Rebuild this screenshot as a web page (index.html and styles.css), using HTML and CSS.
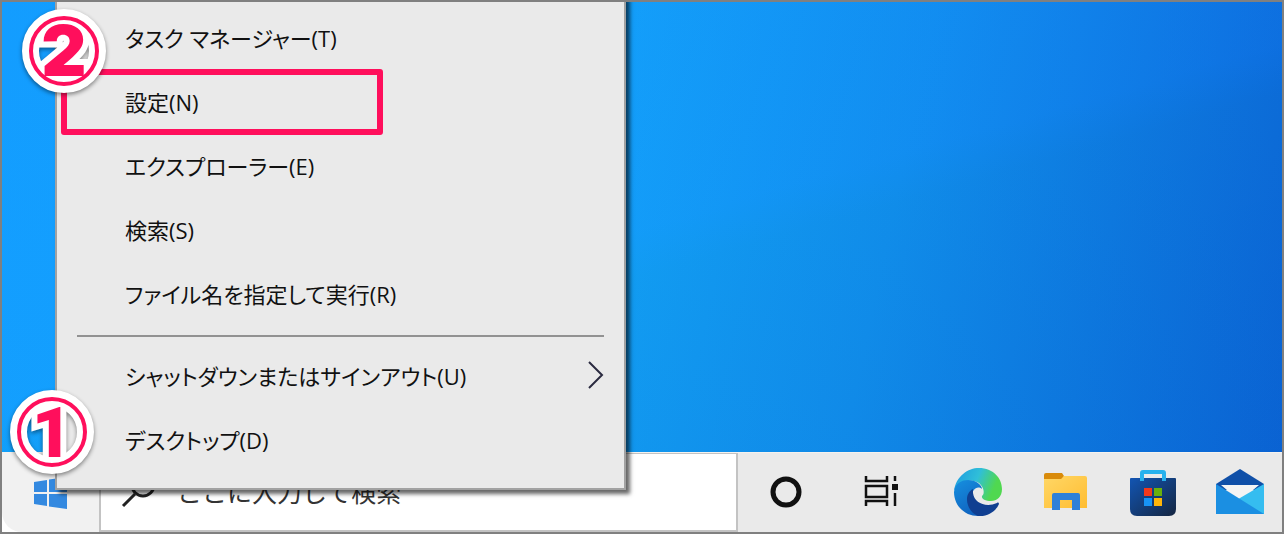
FILE: index.html
```
<!DOCTYPE html>
<html lang="ja">
<head>
    <meta charset="utf-8">
    <title>デスクトップ</title>
    <link rel="stylesheet" href="styles.css">
</head>
<body>
    <main class="desktop"></main>

    <footer class="taskbar">
        <button type="button" class="start" aria-label="スタート">
            <svg width="34" height="32" viewBox="0 0 34 32" fill="#3389e0">
                <path d="M0 5L13 3V15H0zM15 2.600L33 0V15H15zM0 17H13V29L0 27zM15 17H33V32L15 29.400z"/>
            </svg>
        </button>
        <label class="search">
            <svg width="34" height="38" viewBox="0 0 34 38" fill="none" stroke="#222" stroke-width="3">
                <circle cx="20" cy="12" r="11"/>
                <path d="M12 21L0 33"/>
            </svg>
            <input type="text" placeholder="ここに入力して検索" aria-label="検索">
        </label>
        <div class="icons">
            <button type="button" aria-label="Cortana">
                <svg width="48" height="48" viewBox="0 0 48 48">
                    <circle cx="24" cy="23" r="13" fill="none" stroke="#111" stroke-width="5"/>
                </svg>
            </button>
            <button type="button" aria-label="タスク ビュー">
                <svg width="48" height="48" viewBox="0 0 48 48" fill="none" stroke="#111" stroke-width="2.500">
                    <path d="M8 7V12H29V7M8 37V32H29V37M8 17H29V28H8zM37 7V12M37 24V37"/>
                    <path d="M34 15H40V21H34z" fill="#111" stroke="none"/>
                </svg>
            </button>
            <button type="button" aria-label="Microsoft Edge">
                <svg width="48" height="48" viewBox="0 0 48 48">
                    <defs>
                        <linearGradient id="edgeTop" x1="0" y1="0.300" x2="1" y2="0.600">
                            <stop offset="0" stop-color="#1e9fe0"/>
                            <stop offset="0.450" stop-color="#30bfd8"/>
                            <stop offset="0.850" stop-color="#50d850"/>
                        </linearGradient>
                        <linearGradient id="edgeSide" x1="0" y1="0" x2="0.600" y2="1">
                            <stop offset="0" stop-color="#1690e0"/>
                            <stop offset="1" stop-color="#0f60bd"/>
                        </linearGradient>
                    </defs>
                    <path d="M0 22C2 7 14 -1 25 -1C39 -1 48 9 48 20C48 28 43 32 37 32C32 32 27 30 28 27C31 25 30 18 25 14C16 8 4 13 0 22z" fill="url(#edgeTop)"/>
                    <path d="M0 23C1 14 8 11 14 11C22 11 28 16 28 20C23 16 18 21 18 27C18 36 26 42 34 41C31 46 27 47 24 47C11 47 0 37 0 23z" fill="url(#edgeSide)"/>
                    <path d="M19 20C9 25 12 42 24 47C34 48 42 42 45 35C45 34 44 33 43 34C32 39 20 34 19 24z" fill="#103f91"/>
                </svg>
            </button>
            <button type="button" class="pinned" aria-label="エクスプローラー">
                <svg width="48" height="48" viewBox="0 0 48 48">
                    <defs>
                        <linearGradient id="folder" x1="0" y1="0" x2="1" y2="1">
                            <stop offset="0" stop-color="#ffd766"/>
                            <stop offset="1" stop-color="#ffbd32"/>
                        </linearGradient>
                    </defs>
                    <path d="M2 6Q2 4 4 4H20L22 7L20 11H2z" fill="#d98b0b"/>
                    <path d="M2 10H19L22 7H43Q45 7 45 9V39H2z" fill="url(#folder)"/>
                    <path d="M10 41V26Q10 24 12 24H36Q38 24 38 26V41H30V31H18V41z" fill="#2f80d8"/>
                </svg>
            </button>
            <button type="button" aria-label="Microsoft Store">
                <svg width="48" height="48" viewBox="0 0 48 48">
                    <defs>
                        <linearGradient id="bag" x1="0" y1="0" x2="1" y2="1">
                            <stop offset="0" stop-color="#1255b3"/>
                            <stop offset="1" stop-color="#152641"/>
                        </linearGradient>
                    </defs>
                    <path d="M0 10Q0 9 1 9H45Q46 9 46 10V40Q46 47 39 47H7Q0 47 0 40z" fill="url(#bag)"/>
                    <path d="M12 12V4Q12 3 13 3H33Q34 3 34 4V12" fill="none" stroke="#27b1ed" stroke-width="4"/>
                    <path d="M14 19H22V27H14z" fill="#f4391b"/>
                    <path d="M24 19H32V27H24z" fill="#6ab00d"/>
                    <path d="M14 29H22V37H14z" fill="#1793f5"/>
                    <path d="M24 29H32V37H24z" fill="#ffb509"/>
                </svg>
            </button>
            <button type="button" aria-label="メール">
                <svg width="48" height="48" viewBox="0 0 48 48">
                    <path d="M-2 15L22 0L46 15V21H-2z" fill="#1050a8"/>
                    <path d="M3 16H41L22 32z" fill="#f4f4f4"/>
                    <path d="M46 15V45H-2L22 29z" fill="#35bdf0"/>
                    <path d="M-2 15L46 45H-2z" fill="#1b8fe2"/>
                </svg>
            </button>
        </div>
    </footer>

    <nav class="menu">
        <ul>
            <li><button type="button">タスク マネージャー(T)</button></li>
            <li class="marked"><button type="button">設定(N)</button></li>
            <li><button type="button">エクスプローラー(E)</button></li>
            <li><button type="button">検索(S)</button></li>
            <li><button type="button">ファイル名を指定して実行(R)</button></li>
        </ul>
        <hr>
        <ul>
            <li>
                <button type="button">シャットダウンまたはサインアウト(U)
                    <svg width="16" height="28" viewBox="0 0 16 28" fill="none" stroke="#2b2b40" stroke-width="2">
                        <path d="M1 1L14 14L1 27"/>
                    </svg>
                </button>
            </li>
            <li><button type="button">デスクトップ(D)</button></li>
        </ul>
        <svg class="step step-two" width="84" height="84" viewBox="0 0 84 84">
            <circle class="disc" cx="42" cy="42" r="33.500"/>
            <text x="42" y="67">2</text>
            <circle class="ring" cx="42" cy="42" r="33"/>
        </svg>
        <svg class="step step-one" width="84" height="84" viewBox="0 0 84 84">
            <circle class="disc" cx="42" cy="42" r="33.500"/>
            <text x="42" y="67">1</text>
            <circle class="ring" cx="42" cy="42" r="33"/>
        </svg>
    </nav>
</body>
</html>
```
FILE: styles.css
```
*,
*::after {
  box-sizing: border-box;
}

body {
  position: relative;
  display: flex;
  flex-direction: column;
  min-height: 100vh;
  margin: 0;
  border: 2px solid #808080;
  overflow: hidden;
  font-family: "Open Sans", "Noto Sans CJK JP", sans-serif;
  font-size: 22px;
  color: #111;
}

button {
  padding: 0;
  border: none;
  background: none;
  font: inherit;
  color: inherit;
}

svg {
  display: block;
  flex: none;
  overflow: visible;
}

.desktop {
  flex: 1;
  background:
    linear-gradient(164deg, rgba(16, 128, 255, 0.2) 0%, rgba(16, 128, 255, 0.15) 50%, rgba(0, 110, 190, 0.1) 56%, rgba(0, 90, 190, 0.15) 100%),
    linear-gradient(102deg, #14a4ff 0%, #14a6fa 44%, #1290ee 68%, #0c64d6 100%);
}

.taskbar {
  display: flex;
  height: 80px;
  border-top: 1px solid #f5f2ee;
  background: #eaeaea;
}

.start {
  display: flex;
  align-items: center;
  justify-content: center;
  width: 97px;
  background: #f1f1f1;
  border-bottom-left-radius: 20px;
  box-shadow: -20px 20px 0 #fff;
}

.search {
  display: flex;
  flex: 1;
  align-items: center;
  gap: 20px;
  padding-left: 22px;
  border: 2px solid #c3c3c3;
  border-top-width: 1px;
  background: #fff;
}

.search input {
  flex: 1;
  min-width: 0;
  padding: 0;
  border: none;
  outline: none;
  background: none;
  font: inherit;
  font-size: 25px;
}

.search input::placeholder {
  color: #333;
}

.icons {
  display: flex;
  align-items: center;
  gap: 48px;
  padding: 0 16px 0 24px;
}

.icons .pinned,
.icons .pinned ~ button {
  margin-left: -8px;
}

/* start button context menu */
.menu {
  position: absolute;
  left: 53px;
  bottom: 42px;
  width: 571px;
  padding: 8px 0 17px;
  border: 2px solid #a2a2a2;
  background: #eaeaea;
  box-shadow: 4px 4px 4px rgba(0, 0, 0, 0.6);
  font-feature-settings: "palt";
}

.menu ul {
  margin: 0;
  padding: 0;
  list-style: none;
}

.menu li {
  position: relative;
}

.menu li button {
  display: flex;
  align-items: center;
  justify-content: space-between;
  width: 100%;
  height: 64px;
  padding: 0 20px 0 68px;
  text-align: left;
}

.menu hr {
  height: 2px;
  margin: 10px 20px 6px;
  border: none;
  background: #929292;
}

.marked::after {
  content: "";
  position: absolute;
  top: 0;
  left: 4px;
  width: 322px;
  height: 66px;
  border: 6px solid #ff0f5c;
  border-radius: 3px;
}

/* numbered steps */
.step {
  position: absolute;
  filter: drop-shadow(0 2px 2px rgba(0, 0, 0, 0.45));
}

.step-two {
  bottom: 395px;
  left: -35px;
}

.step-one {
  bottom: 14px;
  left: -47px;
}

.disc {
  fill: none;
  stroke: #fff;
  stroke-width: 17px;
}

.ring {
  fill: none;
  stroke: #ff0f5c;
  stroke-width: 4px;
}

.step text {
  fill: #ff0f5c;
  stroke: #fff;
  stroke-width: 12px;
  paint-order: stroke;
  font-family: Roboto, "Liberation Sans", sans-serif;
  font-size: 70px;
  font-weight: 900;
  text-anchor: middle;
}

.step-two text {
  font-family: Inter, "Liberation Sans", sans-serif;
}
```
